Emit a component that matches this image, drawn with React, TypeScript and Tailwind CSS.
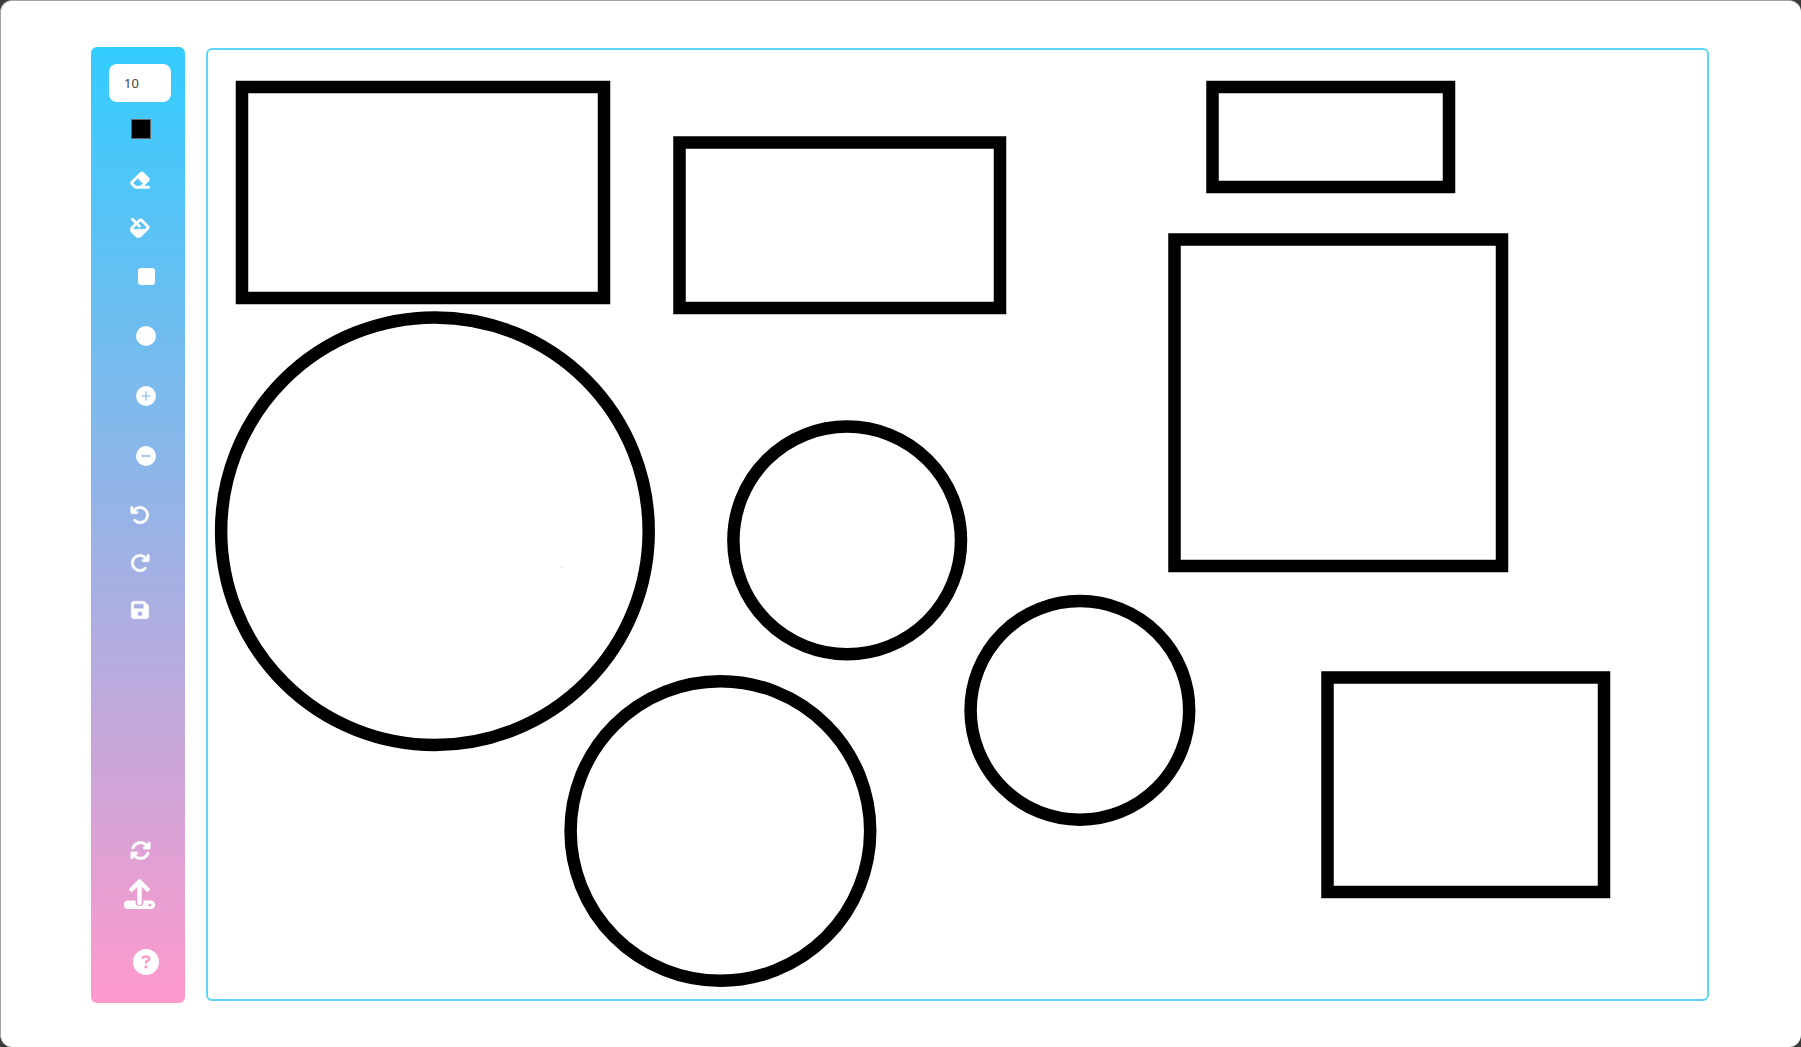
import { FaEraser, FaFill, FaArrowRotateLeft, FaArrowRotateRight, FaFloppyDisk, FaArrowsRotate, FaCircleQuestion } from "react-icons/fa6";

const rects = [
  { x: 242, y: 87, w: 362, h: 211 },
  { x: 679.5, y: 142.5, w: 320.5, h: 165.5 },
  { x: 1212.5, y: 87, w: 236.5, h: 100 },
  { x: 1174.5, y: 239.5, w: 327.5, h: 326.5 },
  { x: 1327.5, y: 677.5, w: 276.5, h: 214.5 },
];

const circles = [
  { cx: 434.9, cy: 531.2, r: 213.8 },
  { cx: 847.2, cy: 540.4, r: 113.8 },
  { cx: 720.4, cy: 831, r: 149.8 },
  { cx: 1079.9, cy: 710.4, r: 109.3 },
];

function DiscIcon({ d }: { d: string }) {
  return (
    <svg viewBox="0 0 20 20" className="w-5 h-5 block" fill="#fff">
      <path fillRule="evenodd" d={`M10 0a10 10 0 1 0 0 20a10 10 0 1 0 0-20z${d}`} />
    </svg>
  );
}

function UploadIcon() {
  return (
    <svg viewBox="0 0 32 32" className="w-8 h-8 block shrink-0 mt-[18px] ml-[4px]" fill="none">
      <path
        fill="#fff"
        fillRule="evenodd"
        d="M4 21.5H11.5V23a4 4 0 0 0 8 0V21.5H27a4.25 4.25 0 0 1 0 8.5H4a4.25 4.25 0 0 1 0-8.5zM26 24.5a1.5 1.5 0 1 0 0 3a1.5 1.5 0 1 0 0-3z"
      />
      <path d="M15.5 24V3M7.5 10.5L15.5 2.5L23.5 10.5" stroke="#fff" strokeWidth={4.5} strokeLinecap="round" strokeLinejoin="round" />
    </svg>
  );
}

export default function App() {
  return (
    <div className="w-full h-screen bg-[#3a3a3a] overflow-hidden font-['Noto_Sans',sans-serif]">
      <div className="w-full h-full bg-white rounded-[12px] border-t border-l border-[#a3a3a3] flex items-start pl-[90px] pt-[46px] gap-[21px]">
        <aside className="w-[94px] h-[956px] shrink-0 rounded-md bg-linear-to-b/srgb from-[#33ccff] to-[#ff99cc] flex flex-col items-center text-white">
          <input
            defaultValue="10"
            readOnly
            className="mt-[17px] w-[62px] h-[38px] ml-[4px] rounded-lg bg-white pl-[15px] text-[13px] text-[#444] outline-none"
          />
          <div className="mt-[17px] w-5 h-5 ml-[5px] bg-black border border-[#666]" />
          <FaEraser className="mt-[30px] ml-[4px] shrink-0" size={22} stroke="currentColor" strokeWidth={12} />
          <FaFill className="mt-[27px] ml-[4px] shrink-0" size={20} stroke="currentColor" strokeWidth={12} />
          <div className="mt-[30px] ml-[16px] w-[17px] h-[17px] rounded-[3px] bg-white" />
          <div className="mt-[41px] ml-[16px] w-5 h-5 rounded-full bg-white" />
          <div className="mt-[40px] ml-[16px]">
            <DiscIcon d="M9.4 5.5h1.2v3.9h3.9v1.2h-3.9v3.9H9.4v-3.9H5.5V9.4h3.9z" />
          </div>
          <div className="mt-[40px] ml-[16px]">
            <DiscIcon d="M5.5 9.2h9v1.6h-9z" />
          </div>
          <FaArrowRotateLeft className="mt-[39px] ml-[4px] shrink-0" size={20} stroke="currentColor" strokeWidth={10} />
          <FaArrowRotateRight className="mt-[28px] ml-[4px] shrink-0" size={20} stroke="currentColor" strokeWidth={10} />
          <FaFloppyDisk className="mt-[27px] ml-[4px] shrink-0" size={20} stroke="currentColor" strokeWidth={12} />
          <FaArrowsRotate className="mt-[220px] ml-[4px] shrink-0" size={21} stroke="currentColor" strokeWidth={10} />
          <UploadIcon />
          <FaCircleQuestion className="mt-[38px] ml-[16px] shrink-0" size={26} />
        </aside>
        <main className="w-[1503px] h-[953px] mt-[1px] shrink-0 rounded-md border-2 border-[#5fd3f5] bg-white overflow-hidden">
          <svg viewBox="208 50 1499 949" className="w-full h-full block">
            {rects.map((r, i) => (
              <rect key={i} x={r.x} y={r.y} width={r.w} height={r.h} fill="none" stroke="#000" strokeWidth={12.5} />
            ))}
            {circles.map((c, i) => (
              <circle key={i} cx={c.cx} cy={c.cy} r={c.r} fill="none" stroke="#000" strokeWidth={12.5} />
            ))}
            <circle cx={561.5} cy={567} r={0.8} fill="#ccc" />
          </svg>
        </main>
      </div>
    </div>
  );
}
